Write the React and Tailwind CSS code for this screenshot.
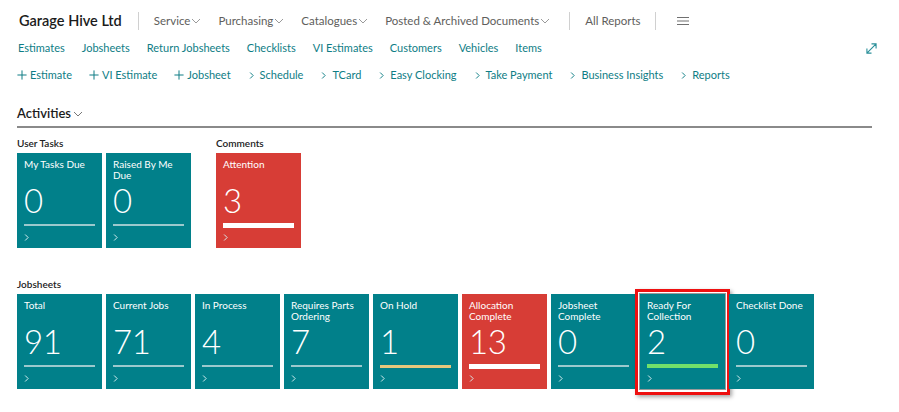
import React from 'react';

const font = { fontFamily: 'Lato, "Open Sans", sans-serif' };

const Chevron = ({ className = '' }) => (
  <svg viewBox="0 0 10 6" className={className} fill="none" stroke="currentColor" strokeWidth="1">
    <path d="M1 1l4 4 4-4" />
  </svg>
);

const Plus = () => (
  <svg viewBox="0 0 12 12" className="w-[10px] h-[10px]" fill="none" stroke="currentColor" strokeWidth="1.2">
    <path d="M6 0.5v11M0.5 6h11" />
  </svg>
);

const Arrow = () => (
  <svg viewBox="0 0 8 10" className="w-[6px] h-[9px]" fill="none" stroke="currentColor" strokeWidth="1.3">
    <path d="M1.5 1l4 4-4 4" />
  </svg>
);

const menus = ['Service', 'Purchasing', 'Catalogues', 'Posted & Archived Documents'];
const links = ['Estimates', 'Jobsheets', 'Return Jobsheets', 'Checklists', 'VI Estimates', 'Customers', 'Vehicles', 'Items'];
const actions = [
  ['plus', 'Estimate'],
  ['plus', 'VI Estimate'],
  ['plus', 'Jobsheet'],
  ['go', 'Schedule'],
  ['go', 'TCard'],
  ['go', 'Easy Clocking'],
  ['go', 'Take Payment'],
  ['go', 'Business Insights'],
  ['go', 'Reports'],
];

const jobsheets = [
  { title: 'Total', value: '91' },
  { title: 'Current Jobs', value: '71' },
  { title: 'In Process', value: '4' },
  { title: 'Requires Parts Ordering', value: '7' },
  { title: 'On Hold', value: '1', bar: 'hold' },
  { title: 'Allocation Complete', value: '13', red: true },
  { title: 'Jobsheet Complete', value: '0' },
  { title: 'Ready For Collection', value: '2', bar: 'ready', marked: true },
  { title: 'Checklist Done', value: '0' },
];

function Tile({ title, value, red, bar, marked }) {
  let barClass = 'h-[2px] bg-[#9cc9cd]';
  if (red) barClass = 'h-[5px] bg-white';
  if (bar === 'hold') barClass = 'h-[3px] bg-[#e6c77c]';
  if (bar === 'ready') barClass = 'h-[4px] bg-[#72e06a]';

  return (
    <div className="relative">
      <div className={`w-[85px] h-[95px] px-[7px] pt-[5px] flex flex-col text-white ${red ? 'bg-[#d73d36]' : 'bg-[#01808a]'} ${marked ? 'outline outline-1 outline-[#9a9a9a]' : ''}`}>
        <div className="h-[24px] text-[10px] leading-[11px] pt-[1px]">{title}</div>
        <div className="h-[36px] text-[33px] font-light leading-[36px] tracking-[-0.5px]">{value}</div>
        <div className="h-[14px] flex flex-col justify-center">
          <div className={`w-full ${barClass}`} />
        </div>
        <div className="h-[10px] pt-[1px] text-[#d8eef0]">
          <Arrow />
        </div>
      </div>
      {marked && (
        <div className="absolute -left-[5px] -top-[5px] -right-[5px] -bottom-[6px] border-[3px] border-[#ee1111] shadow-[2px_2px_4px_rgba(0,0,0,0.35)]" />
      )}
    </div>
  );
}

export default function App() {
  return (
    <div className="w-[899px] h-[412px] bg-white overflow-hidden" style={font}>
      {/* top bar */}
      <div className="flex items-center h-[40px] pl-[19px] pt-[1px]">
        <span className="text-[14.5px] text-[#1b1b1b] font-semibold">Garage Hive Ltd</span>
        <span className="w-px h-[18px] bg-[#d0d0d0] ml-[16px] mr-[15px]" />
        {menus.map((m) => (
          <span key={m} className="flex items-center text-[11.5px] text-[#605e5c] mr-[17px]">
            {m}
            <Chevron className="w-[10px] h-[6px] ml-[1px] text-[#9a9a9a]" />
          </span>
        ))}
        <span className="w-px h-[18px] bg-[#d0d0d0] ml-[2px] mr-[15px]" />
        <span className="text-[11.5px] text-[#605e5c]">All Reports</span>
        <span className="w-px h-[18px] bg-[#d0d0d0] ml-[14px] mr-[21px]" />
        <svg viewBox="0 0 12 8" className="w-[12px] h-[8px] text-[#707070]" fill="none" stroke="currentColor" strokeWidth="1">
          <path d="M0 0.5h12M0 4h12M0 7.5h12" />
        </svg>
      </div>

      {/* links */}
      <div className="flex items-center h-[16px] pl-[18px] pr-[22px]">
        <div className="flex gap-[17px] text-[11px] text-[#0e7d85]">
          {links.map((l) => (
            <span key={l}>{l}</span>
          ))}
        </div>
        <svg viewBox="0 0 12 12" className="ml-auto w-[11px] h-[11px] text-[#2a8f99]" fill="none" stroke="currentColor" strokeWidth="1.2">
          <path d="M1 11L11 1M6 1h5v5M1 6v5h5" />
        </svg>
      </div>

      {/* actions */}
      <div className="flex items-center gap-[17px] pl-[17px] mt-[11px] h-[16px] text-[11px] text-[#0e7d85]">
        {actions.map(([kind, label]) => (
          <span key={label} className={`flex items-center ${kind === 'plus' ? 'gap-[3px]' : 'gap-[4px]'}`}>
            {kind === 'plus' ? (
              <Plus />
            ) : (
              <span className="w-[8px] flex justify-center">
                <Arrow />
              </span>
            )}
            {label}
          </span>
        ))}
      </div>

      {/* activities */}
      <div className="mx-[17px] w-[855px] mt-[20px]">
        <div className="flex items-center h-[22px] text-[13px] text-[#1b1b1b] font-semibold">
          Activities
          <Chevron className="w-[10px] h-[6px] ml-[2px] text-[#777]" />
        </div>
        <div className="h-[2px] bg-[#8a8a8a] mt-[1px]" />

        <div className="flex gap-[25px] mt-[7px]">
          <div>
            <div className="text-[10px] font-semibold text-[#222] h-[16px] leading-[16px]">User Tasks</div>
            <div className="flex gap-[4px] mt-[2px]">
              <Tile title="My Tasks Due" value="0" />
              <Tile title="Raised By Me Due" value="0" />
            </div>
          </div>
          <div>
            <div className="text-[10px] font-semibold text-[#222] h-[16px] leading-[16px]">Comments</div>
            <div className="flex gap-[4px] mt-[2px]">
              <Tile title="Attention" value="3" red />
            </div>
          </div>
        </div>

        <div className="mt-[28px]">
          <div className="text-[10px] font-semibold text-[#222] h-[16px] leading-[16px]">Jobsheets</div>
          <div className="flex gap-[4px] mt-[2px]">
            {jobsheets.map((t) => (
              <Tile key={t.title} {...t} />
            ))}
          </div>
        </div>
      </div>
    </div>
  );
}
